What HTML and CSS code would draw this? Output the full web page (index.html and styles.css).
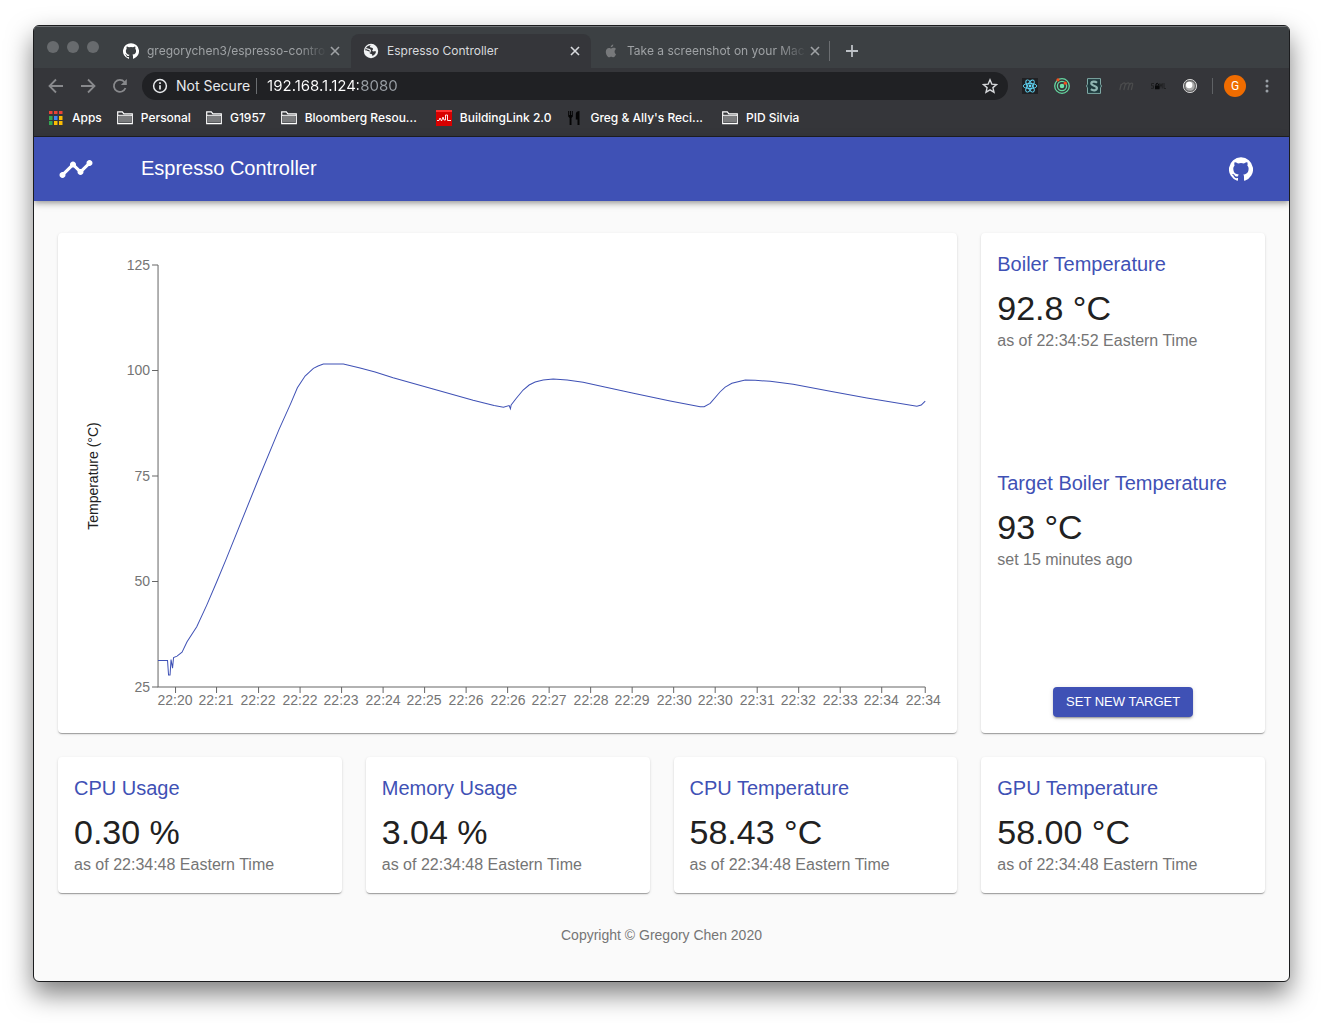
FILE: index.html
```html
<!DOCTYPE html>
<html lang="en">
<head>
<meta charset="utf-8">
<title>Espresso Controller</title>
<link rel="stylesheet" href="styles.css">
</head>
<body>
<svg class="defs" aria-hidden="true">
  <symbol id="github" viewBox="0 0 24 24"><path d="M12 .3a12 12 0 0 0-3.8 23.4c.6.1.8-.3.8-.6v-2c-3.3.7-4-1.6-4-1.6-.6-1.4-1.4-1.8-1.4-1.8-1-.7.1-.7.1-.7 1.2 0 1.9 1.2 1.9 1.2 1 1.8 2.8 1.3 3.5 1 0-.8.4-1.3.7-1.6-2.7-.3-5.5-1.3-5.5-6 0-1.2.5-2.3 1.3-3.1-.2-.4-.6-1.6 0-3.2 0 0 1-.3 3.4 1.2a11.5 11.5 0 0 1 6 0c2.3-1.5 3.3-1.2 3.3-1.2.6 1.6.2 2.8 0 3.2.9.8 1.3 1.9 1.3 3.2 0 4.6-2.8 5.6-5.5 5.9.5.4.9 1 .9 2.2v3.3c0 .3.1.7.8.6A12 12 0 0 0 12 .3"/></symbol>
  <symbol id="close" viewBox="0 0 16 16"><path d="M4 4l8 8M12 4l-8 8" stroke="currentColor" stroke-width="1.6" fill="none"/></symbol>
  <symbol id="folder" viewBox="0 0 16 16"><path d="M.7 13.7V1.900h4.600l1.600 2h8.400v9.800z" fill="none" stroke="#fff" stroke-width="1.2"/><path d="M2 6h12v6.600H2z" fill="#7b7c7e"/><path d="M1 5.300h14" stroke="#fff" stroke-width="1"/></symbol>
</svg>
<div class="window">
  <header class="browser">
    <div class="tabstrip">
      <div class="lights"><i></i><i></i><i></i></div>
      <div class="tab">
        <svg class="icon favicon-white"><use href="#github"/></svg>
        <span class="tab-title tab-title-cut">gregorychen3/espresso-contro</span>
        <button class="bare" aria-label="Close tab"><svg class="icon"><use href="#close"/></svg></button>
      </div>
      <div class="tab tab-active">
        <svg class="icon" viewBox="0 0 16 16"><circle cx="8" cy="8" r="7.200" fill="#f1f3f4"/><path d="M8.500 2.200c-1.600.2-2 1.300-1.300 2.100.8.700 2.600.1 2.800 1.500.2 1.200-1 1.200-.8 2 .4 1 2.300.3 3.800.7-.2 2-1.600 3.800-3.700 4.500.3-1.500-.7-2.200-1.900-2.300-1.300-.2-.7-1.600-1.600-2.400C4.700 7.600 3.300 8 2.300 7.200 2.600 4.200 5 2 8.500 2.200z" fill="#35363a"/><path d="M3 5.500c1.500.8 3.500.3 4.200 1.600.5 1-.6 1.600-.3 2.600" stroke="#f1f3f4" stroke-width="1.300" fill="none"/></svg>
        <span class="tab-title">Espresso Controller</span>
        <button class="bare" aria-label="Close tab"><svg class="icon"><use href="#close"/></svg></button>
      </div>
      <div class="tab">
        <svg class="icon favicon-dim" viewBox="0 0 16 16"><path d="M10.300 1.500c.1 1.500-1.200 2.900-2.600 2.800-.1-1.400 1.200-2.700 2.600-2.800zM13 11.200c-.7 1.700-1.700 3.100-2.700 3.100-.8 0-1.100-.5-2.100-.5s-1.400.5-2.100.5c-1.500 0-3.300-3-3.300-5.600 0-2.500 1.600-3.800 3.100-3.800 1 0 1.700.6 2.300.6.600 0 1.400-.7 2.600-.7.900 0 1.700.5 2.200 1.200-1.900 1.100-1.700 4.200 0 5.200z"/></svg>
        <span class="tab-title tab-title-cut">Take a screenshot on your Mac</span>
        <button class="bare" aria-label="Close tab"><svg class="icon"><use href="#close"/></svg></button>
      </div>
      <button class="bare new-tab" aria-label="New tab"><svg class="icon" viewBox="0 0 16 16"><path d="M8 2v12M2 8h12" stroke="#bdc1c6" stroke-width="1.800"/></svg></button>
    </div>

    <div class="toolbar">
      <nav class="nav">
        <button class="bare" aria-label="Back"><svg class="icon" viewBox="0 0 16 16"><path d="M15 8H2M8 1.500L1.500 8 8 14.500"/></svg></button>
        <button class="bare" aria-label="Forward"><svg class="icon" viewBox="0 0 16 16"><path d="M1 8h13M8 1.500L14.500 8 8 14.500"/></svg></button>
        <button class="bare" aria-label="Reload"><svg class="icon" viewBox="0 0 16 16"><path d="M13.500 10A6 6 0 1 1 12.500 4"/><path d="M14.800 1v6h-6z" fill="#88898c" stroke="none"/></svg></button>
      </nav>
      <div class="omnibox">
        <svg class="icon" viewBox="0 0 16 16"><circle cx="8" cy="8" r="6.400" fill="none" stroke="#e8eaed" stroke-width="1.500"/><path d="M8 7.200v4.300M8 4.300v1.700" stroke="#e8eaed" stroke-width="1.700"/></svg>
        <label class="security" for="address">Not Secure</label>
        <input class="address" id="address" type="text" value="192.168.1.124:8080">
        <button class="bare" aria-label="Bookmark this page"><svg class="icon" viewBox="0 0 16 16"><path d="M8 1.800l1.800 4.300 4.700.4-3.600 3.100 1.100 4.600L8 11.800l-4 2.400 1.100-4.600L1.500 6.500l4.700-.4z" fill="none" stroke="#d5d7da" stroke-width="1.400"/></svg></button>
      </div>
      <div class="extensions">
        <button class="bare" aria-label="React developer tools"><svg class="icon" viewBox="0 0 16 16"><path fill="#202124" d="M0 0h16v16H0z"/><g fill="none" stroke="#61dafb" stroke-width=".9"><ellipse cx="8" cy="8" rx="6.800" ry="2.600"/><ellipse cx="8" cy="8" rx="6.800" ry="2.600" transform="rotate(60 8 8)"/><ellipse cx="8" cy="8" rx="6.800" ry="2.600" transform="rotate(120 8 8)"/></g><circle cx="8" cy="8" r="1.400" fill="#61dafb"/></svg></button>
        <button class="bare" aria-label="Orbit"><svg class="icon" viewBox="0 0 16 16"><g fill="none" stroke="#65d6a0" stroke-width="1.300"><circle cx="8" cy="8" r="7.300"/><circle cx="8" cy="8" r="4.600"/></g><circle cx="8" cy="8" r="2.300" fill="#6fe3ab"/><circle cx="4" cy="1.800" r="1.600" fill="#f4511e"/><circle cx="11.300" cy="5.200" r="1.600" fill="#f4511e"/></svg></button>
        <button class="bare" aria-label="Stylus"><svg class="icon" viewBox="0 0 16 16"><path d="M1.500.6h13v5.600l1 1.800-1 1.800v5.600h-13V9.800L.5 8l1-1.800z" fill="#1e3a3d" stroke="#7fa9a5"/><path d="M11 4.700C9.500 3.300 5.300 3 5.300 5.600c0 2.700 5.600 1.600 5.600 4.500 0 2.700-4 2.800-6 1.100" fill="none" stroke="#8fb5b1" stroke-width="2.200"/></svg></button>
        <button class="bare" aria-label="Momentum"><svg class="icon" viewBox="0 0 16 16"><path d="M1.800 12L3.300 6M3.300 7c1.800-2.800 4.400-2.800 3.900-.3L5.800 12M7.200 7c1.800-2.800 4.600-2.800 4.100-.3L9.900 12M11.300 7c1.500-2.500 3.700-2.500 3.300-.3L13.300 12" fill="none" stroke="#4b4c4d" stroke-width="1.300"/></svg></button>
        <button class="bare" aria-label="SAML decoder"><svg class="icon" viewBox="0 0 16 16"><path d="M4 5.500H1.500v2.300h2v2.500H1M9.800 10.500v-5l1.200 3 1.200-3v5M14 5v5.500h2" fill="none" stroke="#202122"/><path d="M5 7.500h4.500v3.700H5z" fill="#08090a"/><path d="M6 7.500V6q1.200-1.500 2.400 0v1.500" fill="none" stroke="#08090a"/></svg></button>
        <button class="bare" aria-label="Recorder"><svg class="icon" viewBox="0 0 16 16"><circle cx="8" cy="8" r="6.600" fill="#666" stroke="#d0d0d0"/><circle cx="8" cy="8" r="4.800" fill="#aaa"/><circle cx="7.200" cy="7" r="3.200" fill="#fff"/></svg></button>
      </div>
      <button class="avatar" aria-label="Profile">G</button>
      <button class="bare menu" aria-label="Menu"><svg class="icon" viewBox="0 0 16 16" fill="#9aa0a6"><circle cx="8" cy="3" r="1.500"/><circle cx="8" cy="8" r="1.500"/><circle cx="8" cy="13" r="1.500"/></svg></button>
    </div>

    <nav class="bookmarks">
      <a href="#"><svg class="icon" viewBox="0 0 16 16"><path fill="#ea4335" d="M1 1h3.500v3H1zM6 1h3.500v3H6zM11 1h3.500v3H11z"/><path fill="#34a853" d="M1 6h3.500v4H1zM1 11h3.500v4H1z"/><path fill="#4285f4" d="M6 6h3.500v4H6z"/><path fill="#fbbc04" d="M11 6h3.500v4H11zM6 11h3.500v4H6zM11 11h3.500v4H11z"/></svg><span>Apps</span></a>
      <a href="#"><svg class="icon"><use href="#folder"/></svg><span>Personal</span></a>
      <a href="#"><svg class="icon"><use href="#folder"/></svg><span>G1957</span></a>
      <a href="#" class="cut"><svg class="icon"><use href="#folder"/></svg><span>Bloomberg Resou...</span></a>
      <a href="#"><svg class="icon" viewBox="0 0 16 16"><path fill="#d80000" d="M0 0h16v16H0z"/><path fill="#f33" d="M0 0h16v2H0z"/><path d="M1 10.500h2l1-2.500 1.500 3L7 7l1 3h1.500V5h2v5.500H15" fill="none" stroke="#fff" stroke-width=".9"/></svg><span>BuildingLink 2.0</span></a>
      <a href="#" class="cut"><svg class="icon" viewBox="0 0 16 16" fill="#050505"><path d="M2.200 1h1v4h.8V1h1v4h.8V1h1v5.500L5.500 8v7H3.600V8L2.200 6.500zM13.500 1v14h-2V9.500h-1.700V4c0-2 1.700-3 3.700-3z"/></svg><span>Greg &amp; Ally's Reci...</span></a>
      <a href="#"><svg class="icon"><use href="#folder"/></svg><span>PID Silvia</span></a>
    </nav>
  </header>

  <div class="page">
    <header class="appbar">
      <svg class="logo" viewBox="0 0 24 24"><path d="M23 8c0 1.100-.9 2-2 2-.18 0-.35-.02-.51-.07l-3.560 3.550c.05.16.07.34.07.52 0 1.100-.9 2-2 2s-2-.9-2-2c0-.18.02-.36.07-.52l-2.550-2.550c-.16.05-.34.07-.52.07s-.36-.02-.52-.07l-4.550 4.560c.05.16.07.33.07.51 0 1.100-.9 2-2 2s-2-.9-2-2 .9-2 2-2c.18 0 .35.02.51.07l4.560-4.550C8.020 9.360 8 9.180 8 9c0-1.100.9-2 2-2s2 .9 2 2c0 .18-.02.36-.07.52l2.550 2.550c.16-.05.34-.07.52-.07s.36.02.52.07l3.550-3.560C19.020 8.350 19 8.180 19 8c0-1.100.9-2 2-2s2 .9 2 2z"/></svg>
      <h1>Espresso Controller</h1>
      <a href="#" class="repo" aria-label="GitHub repository"><svg><use href="#github"/></svg></a>
    </header>

    <main class="dashboard">
      <section class="card chart-card">
        <svg class="chart" viewBox="0 0 899 500" role="img" aria-label="Boiler temperature over time">
          <g class="axis">
            <path d="M100 32V454H867"/>
            <path d="M94 32h6M94 137.500h6M94 243h6M94 348.500h6M94 454h6"/>
            <path d="M117.500 454v6M158.500 454v6M200.500 454v6M242 454v6M283.500 454v6M325 454v6M366.500 454v6M408 454v6M449.500 454v6M491 454v6M532.500 454v6M574 454v6M615.500 454v6M657 454v6M699 454v6M740.500 454v6M782 454v6M823.500 454v6M867 454v6"/>
          </g>
          <g class="ticks ticks-y">
            <text x="92" y="37">125</text><text x="92" y="142">100</text><text x="92" y="248">75</text><text x="92" y="353">50</text><text x="92" y="459">25</text>
          </g>
          <g class="ticks ticks-x">
            <text x="117" y="472">22:20</text><text x="158" y="472">22:21</text><text x="200" y="472">22:22</text><text x="242" y="472">22:22</text><text x="283" y="472">22:23</text><text x="325" y="472">22:24</text><text x="366" y="472">22:25</text><text x="408" y="472">22:26</text><text x="450" y="472">22:26</text><text x="491" y="472">22:27</text><text x="533" y="472">22:28</text><text x="574" y="472">22:29</text><text x="616" y="472">22:30</text><text x="657" y="472">22:30</text><text x="699" y="472">22:31</text><text x="740" y="472">22:32</text><text x="782" y="472">22:33</text><text x="823" y="472">22:34</text><text x="865" y="472">22:34</text>
          </g>
          <text class="axis-title" transform="translate(40 243) rotate(-90)">Temperature (°C)</text>
          <path class="line" d="M100 427.500H109.500L110.500 442H112L113 426.500L114.500 435L115.500 424.500L119 423L124 419L129 408.700L138.700 393.700L148.700 372L158.700 348.700L167.700 327L200 247L221 196.300L232.700 170.300L239.300 154.700L247 143L255.300 135.300L260 133L265.300 131H285.300L302 135L317 139L335 144.700L375 156L415 167.300L436 172.500L445.300 174.300L451 172.500L452.300 175.700L453 172L458 165.500L465 157L471 152L477 149L485 147L495 146L509 147L525 149.300L542 153L575.300 160.300L612 168L642 173.700H646L652 170.300L662 158.700L667 154L673.700 150.300L687 147L697 147.300L712 148.300L735 151.300L772 158.300L808.700 165L858.700 173.300L863 172L867 168"/>
        </svg>
      </section>

      <section class="card boiler">
        <div class="metric">
          <h2>Boiler Temperature</h2>
          <p class="value">92.8 °C</p>
          <p class="note">as of 22:34:52 Eastern Time</p>
        </div>
        <div class="metric">
          <h2>Target Boiler Temperature</h2>
          <p class="value">93 °C</p>
          <p class="note">set 15 minutes ago</p>
        </div>
        <button class="primary">SET NEW TARGET</button>
      </section>

      <section class="card metric">
        <h2>CPU Usage</h2>
        <p class="value">0.30 %</p>
        <p class="note">as of 22:34:48 Eastern Time</p>
      </section>
      <section class="card metric">
        <h2>Memory Usage</h2>
        <p class="value">3.04 %</p>
        <p class="note">as of 22:34:48 Eastern Time</p>
      </section>
      <section class="card metric">
        <h2>CPU Temperature</h2>
        <p class="value">58.43 °C</p>
        <p class="note">as of 22:34:48 Eastern Time</p>
      </section>
      <section class="card metric">
        <h2>GPU Temperature</h2>
        <p class="value">58.00 °C</p>
        <p class="note">as of 22:34:48 Eastern Time</p>
      </section>
    </main>
    <footer class="copyright">Copyright © Gregory Chen 2020</footer>
  </div>
</div>
</body>
</html>
```

FILE: styles.css
```css
* { box-sizing: border-box; }

body {
  margin: 0;
  padding: 25px 33px 41px;
  background: #fff;
  font-family: "Liberation Sans", Arial, sans-serif;
}

h1, h2, p { margin: 0; font-weight: 400; }
a { color: inherit; text-decoration: none; }
.defs { display: none; }

.window {
  border: 1px solid #1b1c1e;
  border-radius: 6px;
  background: #fafafa;
  box-shadow: 0 12px 26px rgba(0, 0, 0, 0.5);
  overflow: hidden;
}

/* Browser frame */
.browser {
  background: #35363a;
  color: #fff;
  font-family: Inter, Roboto, sans-serif;
  font-size: 12px;
  border-bottom: 1px solid #202124;
}

.icon { display: block; flex: none; width: 16px; height: 16px; }

.bare {
  display: block;
  flex: none;
  padding: 0;
  border: 0;
  background: none;
  color: inherit;
}

.tabstrip {
  display: flex;
  align-items: center;
  height: 42px;
  padding-top: 8px;
  background: #3c4043;
  box-shadow: inset 0 1px #717477;
}

.lights {
  display: flex;
  gap: 8px;
  width: 77px;
  height: 34px;
  padding: 7px 0 0 13px;
}
.lights i { width: 12px; height: 12px; border-radius: 50%; background: #686b6e; }

.tab {
  display: flex;
  align-items: center;
  flex: 0 1 240px;
  min-width: 0;
  height: 34px;
  padding: 0 8px 0 12px;
  color: #9fa2a5;
}
.tab-active {
  border-radius: 8px 8px 0 0;
  background: #35363a;
  color: #d8dadd;
}
.tab-title {
  flex: 1;
  min-width: 0;
  padding-left: 8px;
  overflow: hidden;
  white-space: nowrap;
  line-height: 16px;
}
.tab-title-cut { mask-image: linear-gradient(to left, transparent, #000 28px); }
.favicon-white { fill: #fff; }
.favicon-dim { fill: #77797b; }
.new-tab {
  height: 20px;
  padding-left: 14px;
  margin-left: -2px;
  border-left: 1px solid #6b6e71;
}

.toolbar {
  display: flex;
  align-items: center;
  height: 36px;
  padding: 0 14px;
}
.nav { display: flex; gap: 16px; margin-right: 14px; }
.nav .icon { fill: none; stroke: #88898c; stroke-width: 1.8; }

.omnibox {
  display: flex;
  align-items: center;
  flex: 1;
  min-width: 0;
  height: 28px;
  padding: 0 10px;
  border-radius: 14px;
  background: #202124;
  font-size: 14px;
}
.security {
  margin-left: 8px;
  padding-right: 6px;
  border-right: 1px solid #6b6e71;
  line-height: 16px;
  color: #e8eaed;
}
/* The host is white and the port grey, so the text is filled from a two-stop background */
.address {
  flex: 1;
  min-width: 0;
  padding: 0 0 0 10px;
  border: 0;
  font: inherit;
  font-size: 15px;
  line-height: 18px;
  color: transparent;
  background: linear-gradient(to right, #fff 101px, #9aa0a6 101px);
  background-clip: text;
  -webkit-background-clip: text;
  outline: 0;
}

.extensions {
  display: flex;
  gap: 16px;
  margin-left: 14px;
  padding-right: 14px;
  border-right: 1px solid #5f6265;
}
.avatar {
  width: 22px;
  height: 22px;
  margin-left: 11px;
  padding: 0;
  border: 0;
  border-radius: 50%;
  background: #ef6c00;
  color: #fff;
  font: 12px/22px Roboto, sans-serif;
}
.menu { margin-left: 13px; }

.bookmarks {
  display: flex;
  height: 32px;
  padding: 0 14px 4px;
  gap: 15px;
}
.bookmarks a { display: flex; align-items: center; gap: 8px; line-height: 16px; font-weight: 500; white-space: nowrap; }
.bookmarks .cut { margin-right: 4px; }

/* Application */
.appbar {
  display: flex;
  align-items: center;
  height: 64px;
  padding: 0 36px 0 24px;
  background: #3f51b5;
  color: #fff;
  box-shadow: 0 2px 4px -1px rgba(0, 0, 0, 0.2), 0 4px 5px rgba(0, 0, 0, 0.14), 0 1px 10px rgba(0, 0, 0, 0.12);
}
.logo { width: 36px; height: 36px; fill: #fff; }
.appbar h1 { flex: 1; margin-left: 47px; padding-bottom: 2px; font-size: 20px; line-height: 30px; }
.repo svg { display: block; width: 24px; height: 24px; fill: #fff; }

.dashboard {
  display: grid;
  grid-template-columns: repeat(4, minmax(0, 1fr));
  gap: 24px;
  padding: 32px 24px;
}
.card {
  border-radius: 4px;
  padding: 16px;
  background: #fff;
  box-shadow: 0 2px 1px -1px rgba(0, 0, 0, 0.2), 0 1px 1px rgba(0, 0, 0, 0.14), 0 1px 3px rgba(0, 0, 0, 0.12);
}
.chart-card { grid-column: span 3; padding: 0; }
.chart { display: block; width: 100%; }
.axis { fill: none; stroke: #666; }
.ticks { fill: #757575; font-size: 14px; }
.ticks-y { text-anchor: end; }
.ticks-x { text-anchor: middle; }
.axis-title { fill: #212121; font-size: 14px; text-anchor: middle; }
.line { fill: none; stroke: #3f51b5; stroke-width: 1; }

.boiler {
  display: flex;
  flex-direction: column;
  justify-content: space-between;
}
.metric h2 { margin-bottom: 9px; font-size: 20px; line-height: 30px; color: #3f51b5; }
.value { font-size: 34px; line-height: 41px; color: #212121; }
.note { font-size: 16px; line-height: 24px; color: #757575; }

.primary {
  align-self: center;
  height: 30px;
  padding: 0 13px;
  border: 0;
  border-radius: 4px;
  background: #3f51b5;
  color: #fff;
  font: 13px/30px "Liberation Sans", Arial, sans-serif;
  box-shadow: 0 3px 1px -2px rgba(0, 0, 0, 0.2), 0 2px 2px rgba(0, 0, 0, 0.14), 0 1px 5px rgba(0, 0, 0, 0.12);
}

.copyright {
  padding-bottom: 36px;
  text-align: center;
  font-size: 14px;
  line-height: 20px;
  color: #757575;
}
```
